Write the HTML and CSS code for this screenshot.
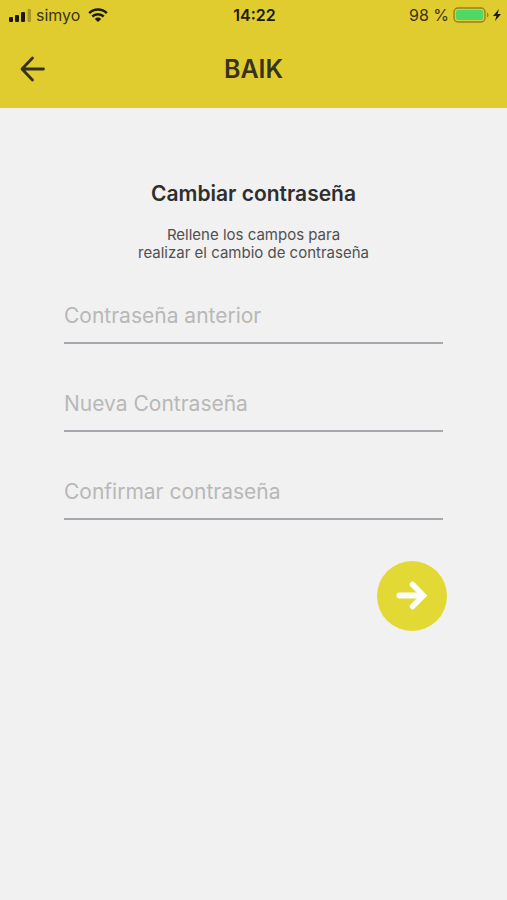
FILE: index.html
```html
<!DOCTYPE html>
<html lang="es">
<head>
  <meta charset="UTF-8">
  <meta name="viewport" content="width=device-width, initial-scale=1">
  <title>BAIK - Cambiar contraseña</title>
  <link rel="stylesheet" href="styles.css">
</head>
<body>
  <header class="header">
    <!-- Barra de estado -->
    <div class="status">
      <div class="status-left">
        <svg class="signal" width="24" height="13" viewBox="0 0 24 13">
          <rect x="1" y="8" width="4" height="5" rx="1"/>
          <rect x="7" y="6" width="4" height="7" rx="1"/>
          <rect x="13" y="3" width="4" height="10" rx="1"/>
          <rect x="19.500" y="0" width="3.500" height="13" rx="1" opacity=".3"/>
        </svg>
        <span>simyo</span>
        <svg class="wifi" width="20" height="14" viewBox="0 0 20 14">
          <path d="M1.2 5.2a12.6 12.6 0 0 1 17.6 0M4.3 8.5a8.2 8.2 0 0 1 11.4 0" fill="none" stroke="#1d1a05" stroke-width="2.5"/>
          <path d="M10 14L6.8 10.9a4.6 4.6 0 0 1 6.4 0z"/>
        </svg>
      </div>
      <span class="time">14:22</span>
      <div class="status-right">
        <span>98 %</span>
        <svg class="battery" width="36" height="16" viewBox="0 0 36 16">
          <rect x="1" y="1" width="31" height="14" rx="4" fill="none" stroke="#8f8420" stroke-width="1.4"/>
          <rect x="3" y="3" width="27" height="10" rx="2" fill="#4fd964"/>
          <path d="M34 5.500c2 .8 2 4.200 0 5z" fill="#8f8420"/>
        </svg>
        <svg class="bolt" width="8" height="14" viewBox="0 0 8 14">
          <path d="M6 1L0 8h3.400L2 13l6-7H4.600z"/>
        </svg>
      </div>
    </div>
    <!-- Barra de navegación -->
    <div class="navbar">
      <button class="back" type="button" aria-label="Volver">
        <svg width="26" height="26" viewBox="0 0 26 26">
          <path d="M23.500 13H2.500M12.500 2L2 13l10.500 11" fill="none" stroke="#37331a" stroke-width="2.800" stroke-linecap="round" stroke-linejoin="round"/>
        </svg>
      </button>
      <h1>BAIK</h1>
    </div>
  </header>

  <main class="content">
    <h2>Cambiar contraseña</h2>
    <p class="intro">Rellene los campos para<br>realizar el cambio de contraseña</p>

    <form class="form">
      <input type="password" placeholder="Contraseña anterior" aria-label="Contraseña anterior">
      <input type="password" placeholder="Nueva Contraseña" aria-label="Nueva Contraseña">
      <input type="password" placeholder="Confirmar contraseña" aria-label="Confirmar contraseña">
      <button class="submit" type="submit" aria-label="Continuar">
        <svg width="32" height="30" viewBox="0 0 32 30">
          <path d="M3.500 14.500H24" fill="none" stroke="#fff" stroke-width="6" stroke-linecap="round"/>
          <path d="M16.500 3.500l11 11-11 11" fill="none" stroke="#fff" stroke-width="5.500" stroke-linecap="round"/>
        </svg>
      </button>
    </form>
  </main>
</body>
</html>
```
FILE: styles.css
```css
* { margin: 0; padding: 0; box-sizing: border-box; }
body {
  background: #f1f1f1;
  color: #2e2e2e;
  font-family: Inter, "Liberation Sans", sans-serif;
}
svg { display: block; }
button {
  border: none;
  background: none;
  cursor: pointer;
}

/* Cabecera */
.header { background: #e1cc30; }
.status {
  display: grid;
  grid-template-columns: 1fr auto 1fr;
  align-items: center;
  height: 30px;
  padding: 0 6px 0 8px;
  color: #3a3410;
  font-size: 16px;
}
.status svg { fill: #1d1a05; }
.status-left,
.status-right {
  display: flex;
  align-items: center;
  gap: 4px;
}
.status-right { justify-content: flex-end; }
.wifi { margin-left: 4px; }
.time {
  color: #1d1a05;
  font-weight: 600;
}
.navbar {
  display: grid;
  grid-template-columns: 1fr auto 1fr;
  align-items: center;
  height: 78px;
  padding: 0 20px;
}
.back { justify-self: start; }
h1 {
  color: #37331a;
  font-size: 25px;
  font-weight: 600;
}

/* Contenido */
.content { padding: 72px 64px 0; }
h2 {
  font-size: 21px;
  font-weight: 600;
  line-height: 28px;
  text-align: center;
}
.intro {
  margin-top: 18px;
  color: #505050;
  font-size: 15px;
  line-height: 18px;
  text-align: center;
}
.form {
  display: flex;
  flex-direction: column;
  gap: 32px;
  margin-top: 26px;
}
.form input {
  width: 100%;
  height: 56px;
  border: none;
  border-bottom: 2px solid #a6a8ad;
  border-radius: 0;
  background: none;
  color: #2e2e2e;
  font-family: inherit;
  font-size: 21px;
  outline: none;
}
.form input::placeholder { color: #b8b8b8; }
.form input:focus { border-color: #e1cc30; }
.submit {
  display: flex;
  align-items: center;
  justify-content: center;
  align-self: flex-end;
  width: 70px;
  height: 70px;
  margin: 9px -4px 0 0;
  border-radius: 50%;
  background: #e2d935;
}
```
